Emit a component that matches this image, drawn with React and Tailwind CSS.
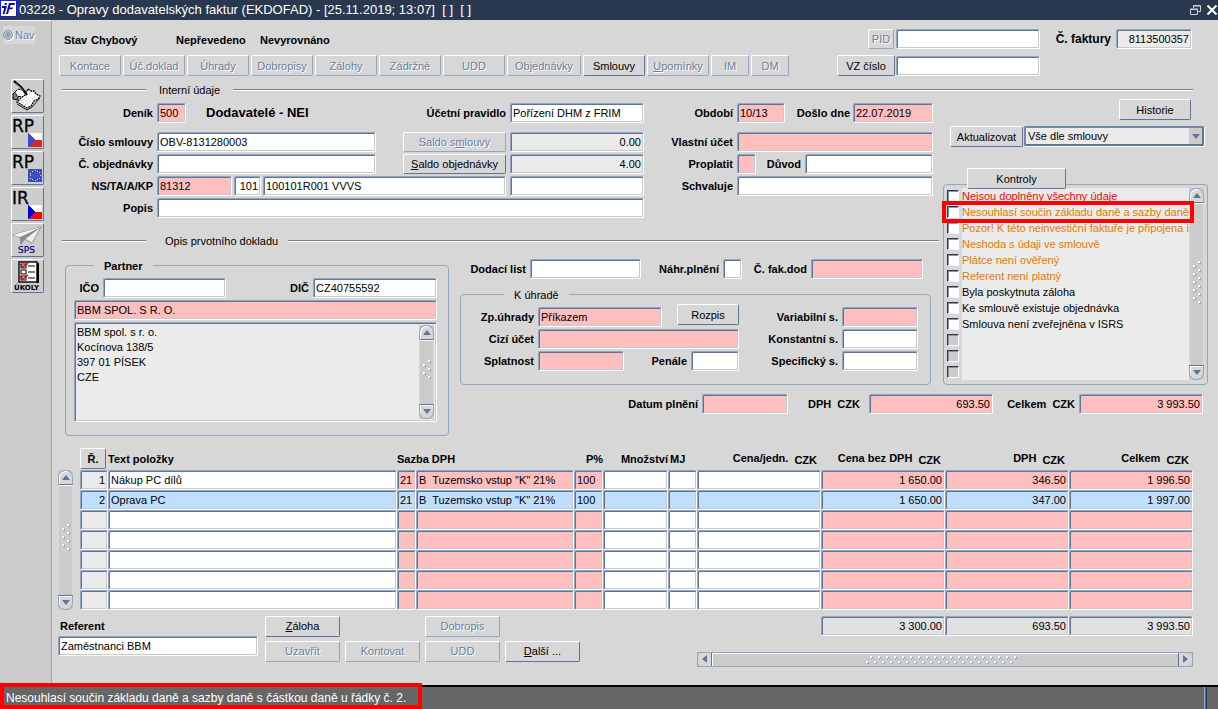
import React from "react";

const TONES = {
  white: "bg-white",
  pink: "bg-[#ffbfbf]",
  blue: "bg-[#bfdfff]",
  gray: "bg-[#ebebeb]",
  total: "bg-[#e1e1e1]",
};

const BEVEL =
  "rounded-[2px] border border-t-[#93a5bf] border-l-[#93a5bf] border-b-white border-r-white shadow-[inset_1px_1px_0_#5f7497,inset_-1px_-1px_0_#cacaca]";

function Field({ tone = "white", className = "", right = false, ...rest }) {
  return (
    <input
      type="text"
      className={`block h-5 min-w-0 px-[2px] text-[11px] text-black outline-none ${BEVEL} ${TONES[tone]} ${right ? "text-right" : ""} ${className}`}
      {...rest}
    />
  );
}

function Btn({ className = "", disabled = false, low = false, children, ...rest }) {
  const look = disabled
    ? "border-b-[#93a5bf] border-r-[#93a5bf] text-[#6a7f9f] [text-shadow:1px_1px_0_#ffffff]"
    : "border-b-[#5f7497] border-r-[#5f7497] text-black";
  return (
    <button
      type="button"
      disabled={disabled}
      className={`${low ? "h-5" : "h-[21px]"} shrink-0 whitespace-nowrap rounded-[2px] border border-t-white border-l-white text-center leading-[18px] ${look} ${className}`}
      {...rest}
    >
      {children}
    </button>
  );
}

function Lbl({ className = "", children, ...rest }) {
  return (
    <label className={`whitespace-nowrap font-bold ${className}`} {...rest}>
      {children}
    </label>
  );
}

function Arrow({ dir }) {
  const d = {
    up: "M0 5 L4 0 L8 5 Z",
    down: "M0 0 L8 0 L4 5 Z",
    left: "M5 0 L5 8 L0 4 Z",
    right: "M0 0 L5 4 L0 8 Z",
  }[dir];
  const flat = dir === "up" || dir === "down";
  return (
    <svg width={flat ? 8 : 5} height={flat ? 5 : 8} aria-hidden="true">
      <path d={d} fill="#5f7497" />
    </svg>
  );
}

function Dots({ count, vertical = true }) {
  const len = count * 4 + 4;
  return (
    <svg width={vertical ? 8 : len * 2} height={vertical ? len : 8} aria-hidden="true">
      {Array.from({ length: vertical ? count : count * 2 }, (_, i) => {
        const a = i * 4 + 1;
        const b = i % 2 ? 1 : 6;
        const x = vertical ? b : a;
        const y = vertical ? a : b;
        return (
          <g key={i}>
            <rect x={x} y={y} width="2" height="2" fill="#93a5bf" />
            <rect x={x - 1} y={y - 1} width="2" height="2" fill="#ffffff" />
          </g>
        );
      })}
    </svg>
  );
}

function VScroll({ className = "", count = 7 }) {
  return (
    <div className={`flex w-[15px] shrink-0 flex-col bg-[#cbcbcb] ${className}`}>
      <button type="button" aria-label="Nahoru" className="flex h-[15px] items-center justify-center rounded-t-[7px] border border-[#93a5bf] border-b-[#5f7497] bg-[#d7d7d7] shadow-[inset_1px_1px_0_#ffffff]">
        <Arrow dir="up" />
      </button>
      <div className="flex flex-1 items-center justify-center border-x border-t border-x-[#d7d7d7] border-t-white">
        <Dots count={count} />
      </div>
      <button type="button" aria-label="Dolů" className="flex h-[15px] items-center justify-center rounded-b-[7px] border border-[#93a5bf] border-t-[#5f7497] bg-[#d7d7d7] shadow-[inset_1px_1px_0_#ffffff]">
        <Arrow dir="down" />
      </button>
    </div>
  );
}

function Rule({ children, className = "" }) {
  return (
    <div className={`flex items-center ${className}`}>
      <div className="h-[2px] w-[84px] border-b border-b-white bg-[#7f7f7f]" />
      {children}
      <div className="h-[2px] flex-1 border-b border-b-white bg-[#7f7f7f]" />
    </div>
  );
}

function ToolButton({ label, children }) {
  return (
    <button
      type="button"
      aria-label={label}
      className="block h-[34px] w-[33px] rounded-[2px] border border-t-white border-l-white border-b-[#5f7497] border-r-[#5f7497] bg-[#cdcdcd]"
    >
      <svg width="31" height="32" viewBox="0 0 31 32" className="overflow-visible" aria-hidden="true">
        {children}
      </svg>
    </button>
  );
}

function CzechFlag({ blue }) {
  return (
    <g shapeRendering="crispEdges">
      <rect x="16" y="17" width="14" height="7" fill="#ffffff" />
      <rect x="16" y="24" width="14" height="7" fill={blue === "#3c4cc8" ? "#dc2626" : "#ff0000"} />
      <path d="M16 17 L23 24 L16 31 Z" fill={blue} />
    </g>
  );
}

function BigLetters({ children }) {
  return (
    <text x="0" y="16" fontFamily="DejaVu Sans, sans-serif" fontSize="17" fill="#000000" stroke="#000000" strokeWidth="0.3">
      {children}
    </text>
  );
}

function Sidebar() {
  return (
    <aside className="flex w-[52px] shrink-0 flex-col items-start border-t border-r border-t-white border-r-[#93a5bf] bg-[#cbcbcb]">
      <label className="mt-[5px] ml-[3px] flex h-[18px] w-8 items-center gap-[2px] bg-[#d7d7d7] text-[#6a7f9f] [text-shadow:1px_1px_0_#ffffff]">
        <input
          type="radio"
          disabled
          checked
          readOnly
          className="h-[10px] w-[10px] shrink-0 appearance-none rounded-full border border-[#7e8fa8] bg-[#93a5bf] shadow-[inset_0_0_0_1px_#d7d7d7,1px_1px_0_#ffffff]"
        />
        Nav
      </label>
      <div className="mt-[35px] ml-[11px] flex flex-col gap-[2px]">
        <ToolButton label="Poznámka">
          <path d="M4 11 L1 14 L1 19 L5 20 L7 15 Z" fill="#808080" stroke="#000" strokeWidth="1" />
          <path d="M3 12 L6 9 L13 11 L16 15 L10 17 L5 16 Z" fill="#ffffff" stroke="#000" strokeWidth="1" strokeDasharray="3 1" />
          <path d="M16 9 L19 11 L22 11 L24 14 L28 16 L26 19 L22 21 L19 26 L15 28 L5 22 L9 18 L13 15 Z" fill="#ffffff" stroke="#000" strokeWidth="1.3" strokeDasharray="2 0.700" />
          <path d="M5 24 L15 30 L20 27 L28 18" fill="none" stroke="#000" strokeWidth="0.9" />
          <path d="M9 21 l8 -5 M11 23 l9 -6 M13 25 l10 -8 M17 14 l3 -1" stroke="#999" strokeWidth="1" strokeDasharray="1 2" />
          <path d="M2 1 L9 7 L15 15" fill="none" stroke="#000" strokeWidth="2.2" />
          <path d="M4 3 L12 11" stroke="#888" strokeWidth="0.6" />
        </ToolButton>
        <ToolButton label="RP Česko">
          <BigLetters>RP</BigLetters>
          <CzechFlag blue="#3c4cc8" />
        </ToolButton>
        <ToolButton label="RP Evropa">
          <BigLetters>RP</BigLetters>
          <rect x="16" y="17" width="14" height="13" fill="#3c4cc8" />
          {Array.from({ length: 12 }, (_, i) => (
            <rect
              key={i}
              x={Math.round(22.5 + 5 * Math.cos((i * Math.PI) / 6))}
              y={Math.round(23 + 5 * Math.sin((i * Math.PI) / 6))}
              width="1"
              height="1"
              fill="#ffee33"
            />
          ))}
        </ToolButton>
        <ToolButton label="IR Česko">
          <BigLetters>IR</BigLetters>
          <CzechFlag blue="#0000e0" />
        </ToolButton>
        <ToolButton label="SPS">
          <path d="M1 11 L29 3 L20 19 L13 15 L9 20 L8 13 Z" fill="#d4d4d4" stroke="#777" strokeWidth="0.8" />
          <path d="M29 3 L8 13 L9 20 L13 15 Z" fill="#8c8c8c" />
          <path d="M29 3 L13 15 L20 19 Z" fill="#eeeeee" stroke="#888" strokeWidth="0.6" />
          <path d="M1 11 L29 3 L8 13 Z" fill="#f6f6f6" />
          <text x="6" y="29" fontFamily="DejaVu Sans, sans-serif" fontSize="9" fill="#00008b" stroke="#00008b" strokeWidth="0.2">
            SPS
          </text>
        </ToolButton>
        <ToolButton label="Úkoly">
          <rect x="7" y="2" width="18" height="20" fill="#ffffff" stroke="#000" strokeWidth="1.4" />
          <path d="M26 3 V23" stroke="#000" strokeWidth="2" />
          {[4, 10, 16].map((y) => (
            <g key={y}>
              <rect x="9" y={y} width="5" height="4" fill="#ffffff" stroke="#000" strokeWidth="1" />
              <path d={`M16 ${y + 2} h7`} stroke="#000" strokeWidth="1" />
              {y !== 10 && <path d={`M8 ${y} l3 3 l5 -4`} fill="none" stroke="#e00000" strokeWidth="1.6" />}
            </g>
          ))}
          <text x="2" y="30" fontFamily="DejaVu Sans, sans-serif" fontWeight="bold" fontSize="7" fill="#000000">
            ÚKOLY
          </text>
        </ToolButton>
      </div>
    </aside>
  );
}

const TABS = [
  { key: "kontace", text: "Kontace", w: "w-[62px]" },
  { key: "doklad", text: "Úč.doklad", w: "w-[62px]" },
  { key: "uhrady", text: "Úhrady", w: "w-[62px]" },
  { key: "dobropisy", text: "Dobropisy", w: "w-[62px]" },
  { key: "zalohy", text: "Zálohy", w: "w-[62px]" },
  { key: "zadrzne", text: "Zádržné", w: "w-[62px]" },
  { key: "udd", text: "UDD", w: "w-[62px]" },
  { key: "objednavky", text: "Objednávky", w: "w-[74px]" },
  { key: "smlouvy", text: "Smlouvy", w: "w-[62px]", on: true },
  { key: "upominky", text: <><u>U</u>pomínky</>, w: "w-[62px]" },
  { key: "im", text: "IM", w: "w-[38px]" },
  { key: "dm", text: "DM", w: "w-[38px]" },
];

function Header() {
  return (
    <div className="flex h-[56px] justify-between pt-[9px] pr-[26px] pl-[7px]">
      <div className="flex flex-col gap-[5px]">
        <div className="flex h-[21px] items-center pl-[5px] font-bold">
          <span className="w-[27px]">Stav</span>
          <span className="w-[85px]">Chybový</span>
          <span className="w-[84px]">Nepřevedeno</span>
          <span>Nevyrovnáno</span>
        </div>
        <div className="flex gap-[2px]">
          {TABS.map((t) => (
            <Btn key={t.key} disabled={!t.on} className={t.w}>
              {t.text}
            </Btn>
          ))}
        </div>
      </div>
      <div className="flex flex-col gap-[6px]">
        <div className="flex items-center justify-end">
          <Btn disabled low className="mr-[2px] w-[26px]">PID</Btn>
          <Field aria-label="PID" className="w-[144px]" />
          <Lbl htmlFor="faktura" className="w-[76px] pr-[5px] text-right text-xs">Č. faktury</Lbl>
          <Field id="faktura" tone="gray" right defaultValue="8113500357" className="w-[76px]" />
        </div>
        <div className="flex items-center">
          <Btn className="mr-px w-[58px]">VZ číslo</Btn>
          <Field aria-label="VZ číslo" className="mr-[152px] w-[144px]" />
        </div>
      </div>
    </div>
  );
}

function InternalForm() {
  return (
    <div className="col-span-2 grid grid-cols-[101px_1fr_134px_85px_196px] items-center gap-x-1 gap-y-[2px] pt-[6px] pr-[6px]">
      <Lbl htmlFor="denik" className="mb-[7px] text-right">Deník</Lbl>
      <div className="mb-[7px] flex items-center">
        <Field id="denik" tone="pink" defaultValue="500" className="w-[29px]" />
        <span className="ml-5 text-[13px] leading-5 font-bold whitespace-nowrap">Dodavatelé - NEI</span>
        <Lbl htmlFor="pravidlo" className="ml-auto">Účetní pravidlo</Lbl>
      </div>
      <Field id="pravidlo" defaultValue="Pořízení DHM z FRIM" className="mb-[7px] w-full" />
      <Lbl htmlFor="obdobi" className="mb-[7px] text-right">Období</Lbl>
      <div className="mb-[7px] flex items-center">
        <Field id="obdobi" tone="pink" defaultValue="10/13" className="w-[48px]" />
        <Lbl htmlFor="doslo" className="flex-1 pr-[3px] text-right">Došlo dne</Lbl>
        <Field id="doslo" tone="pink" defaultValue="22.07.2019" className="w-[80px]" />
      </div>

      <Lbl htmlFor="csmlouvy" className="text-right">Číslo smlouvy</Lbl>
      <div className="flex items-center gap-[27px]">
        <Field id="csmlouvy" defaultValue="OBV-8131280003" className="flex-1" />
        <Btn disabled low className="w-[103px]">Saldo s<u>m</u>louvy</Btn>
      </div>
      <Field aria-label="Saldo smlouvy" tone="gray" right defaultValue="0.00" className="w-full" />
      <Lbl htmlFor="ucet" className="text-right">Vlastní účet</Lbl>
      <Field id="ucet" tone="pink" className="w-full" />

      <Lbl htmlFor="cobj" className="text-right">Č. objednávky</Lbl>
      <div className="flex items-center gap-[27px]">
        <Field id="cobj" className="flex-1" />
        <Btn low className="w-[103px]"><u>S</u>aldo objednávky</Btn>
      </div>
      <Field aria-label="Saldo objednávky" tone="gray" right defaultValue="4.00" className="w-full" />
      <Lbl htmlFor="proplatit" className="text-right">Proplatit</Lbl>
      <div className="flex items-center">
        <Field id="proplatit" tone="pink" className="w-[19px]" />
        <Lbl htmlFor="duvod" className="w-[49px] pr-1 text-right">Důvod</Lbl>
        <Field id="duvod" className="flex-1" />
      </div>

      <Lbl htmlFor="ns" className="text-right">NS/TA/A/KP</Lbl>
      <div className="flex gap-[2px]">
        <Field id="ns" tone="pink" defaultValue="81312" className="w-[75px]" />
        <Field aria-label="TA" right defaultValue="101" className="w-[27px]" />
        <Field aria-label="A" defaultValue="100101R001 VVVS" className="flex-1" />
      </div>
      <Field aria-label="KP" className="w-full" />
      <Lbl htmlFor="schvaluje" className="text-right">Schvaluje</Lbl>
      <Field id="schvaluje" className="w-full" />

      <Lbl htmlFor="popis" className="text-right">Popis</Lbl>
      <Field id="popis" className="col-span-2 w-full" />
    </div>
  );
}

const CHECKS = [
  { text: "Nejsou doplněny všechny údaje", tone: "text-[#ff0000]" },
  { text: "Nesouhlasí součin základu daně a sazby daně", tone: "text-[#e07b00]", active: true },
  { text: "Pozor! K této neinvestiční faktuře je připojena in", tone: "text-[#e07b00]" },
  { text: "Neshoda s údaji ve smlouvě", tone: "text-[#e07b00]" },
  { text: "Plátce není ověřený", tone: "text-[#e07b00]" },
  { text: "Referent není platný", tone: "text-[#e07b00]" },
  { text: "Byla poskytnuta záloha", tone: "text-black" },
  { text: "Ke smlouvě existuje objednávka", tone: "text-black" },
  { text: "Smlouva není zveřejněna v ISRS", tone: "text-black" },
  { text: "" },
  { text: "" },
  { text: "" },
];

function Checks() {
  return (
    <div className="row-span-3 flex flex-col pt-[2px] pr-[10px] pl-1">
      <Btn className="mr-[17px] w-[72px] self-end">Historie</Btn>
      <div className="mt-[6px] mr-1 ml-[7px] flex gap-px">
        <Btn className="w-[73px]">Aktualizovat</Btn>
        <div className="relative min-w-0 flex-1">
          <select
            aria-label="Rozsah aktualizace"
            className="block h-5 w-full appearance-none rounded-[2px] border-2 border-[#5f7497] border-t-[#7489a8] border-l-[#7489a8] bg-[#ebebeb] pl-[2px] text-[11px] text-black shadow-[1px_1px_0_#ffffff] outline-none"
          >
            <option>Vše dle smlouvy</option>
          </select>
          <span className="pointer-events-none absolute top-[2px] right-[2px] flex h-4 w-[13px] items-center justify-center bg-[#cbcbcb]">
            <Arrow dir="down" />
          </span>
        </div>
      </div>
      <Btn className="z-10 mt-[21px] -mb-[5px] ml-6 w-[99px] self-start bg-[#d7d7d7]">Kontroly</Btn>
      <div className="relative flex rounded-[4px] border border-[#93a5bf] pt-[3px] pr-[3px] pb-1 pl-[3px]">
        <ul className="min-w-0 flex-1">
          {CHECKS.map((c, i) => (
            <li key={i} className={`flex h-4 items-center ${c.active ? "bg-[#bfdfff]" : ""}`}>
              <input
                type="checkbox"
                id={`kontrola-${i}`}
                aria-label={c.text || "Volná kontrola"}
                disabled={!c.text}
                className="mr-[3px] h-3 w-3 shrink-0 appearance-none border border-t-[#29384e] border-l-[#29384e] border-b-white border-r-white bg-white shadow-[inset_1px_1px_0_#8794a8] disabled:bg-[#cbcbcb]"
              />
              <label
                htmlFor={`kontrola-${i}`}
                className={`block h-4 min-w-0 flex-1 overflow-hidden bg-[#ebebeb] leading-4 whitespace-nowrap ${c.tone || ""}`}
              >
                {c.text}
              </label>
            </li>
          ))}
        </ul>
        <VScroll count={11} />
        <div className="pointer-events-none absolute top-4 -left-[2px] h-[22px] w-[252px] border-4 border-[#ff0000]" />
      </div>
    </div>
  );
}

function Partner() {
  return (
    <fieldset className="row-span-2 mr-[3px] ml-[13px] min-w-0 self-start rounded-[4px] border border-[#93a5bf] pr-[11px] pb-[13px] pl-2">
      <legend className="ml-5 px-[10px] leading-[14px] font-bold">Partner</legend>
      <div className="mt-[5px] flex items-center">
        <Lbl htmlFor="ico" className="w-[29px] pr-1 text-right">IČO</Lbl>
        <Field id="ico" className="w-[123px]" />
        <Lbl htmlFor="dic" className="flex-1 pr-1 text-right">DIČ</Lbl>
        <Field id="dic" defaultValue="CZ40755592" className="w-[124px]" />
      </div>
      <Field aria-label="Název partnera" tone="pink" defaultValue="BBM SPOL. S R. O." className="mt-[2px] w-full" />
      <div className={`mt-[2px] flex h-[100px] p-[2px] ${BEVEL} ${TONES.gray}`}>
        <textarea
          aria-label="Adresa partnera"
          className="min-w-0 flex-1 resize-none overflow-hidden bg-transparent text-[11px] leading-[15px] outline-none"
          defaultValue={"BBM spol. s r. o.\nKocínova 138/5\n397 01 PÍSEK\nCZE"}
        />
        <VScroll count={5} />
      </div>
    </fieldset>
  );
}

function Payment() {
  return (
    <div className="min-w-0 pr-2">
      <div className="flex items-center">
        <Lbl htmlFor="dodaci" className="w-[78px] pr-1 text-right">Dodací list</Lbl>
        <Field id="dodaci" className="flex-1" />
        <Lbl htmlFor="nahr" className="w-[82px] pr-1 text-right">Náhr.plnění</Lbl>
        <Field id="nahr" className="w-[19px]" />
        <Lbl htmlFor="fakdod" className="w-[69px] pr-1 text-right">Č. fak.dod</Lbl>
        <Field id="fakdod" tone="pink" className="mr-2 w-[112px]" />
      </div>
      <fieldset className="mt-[9px] ml-2 min-w-0 rounded-[4px] border border-[#93a5bf] pr-3 pb-[13px]">
        <legend className="ml-[43px] px-[10px] leading-[14px]">K úhradě</legend>
        <div className="mt-[5px] grid grid-cols-[73px_1fr_95px_76px] items-center gap-x-1 gap-y-[2px]">
          <Lbl htmlFor="zp" className="text-right">Zp.úhrady</Lbl>
          <div className="flex h-5 items-center justify-between">
            <Field id="zp" tone="pink" defaultValue="Příkazem" className="w-[124px]" />
            <Btn className="mb-1 w-[62px]">Rozpis</Btn>
          </div>
          <Lbl htmlFor="vs" className="text-right">Variabilní s.</Lbl>
          <Field id="vs" tone="pink" className="w-full" />
          <Lbl htmlFor="cizi" className="text-right">Cizí účet</Lbl>
          <Field id="cizi" tone="pink" className="w-full" />
          <Lbl htmlFor="ks" className="text-right">Konstantní s.</Lbl>
          <Field id="ks" className="w-full" />
          <Lbl htmlFor="splatnost" className="text-right">Splatnost</Lbl>
          <div className="flex items-center">
            <Field id="splatnost" tone="pink" className="w-[86px]" />
            <Lbl htmlFor="penale" className="flex-1 pr-1 text-right">Penále</Lbl>
            <Field id="penale" className="w-[48px]" />
          </div>
          <Lbl htmlFor="ss" className="text-right">Specifický s.</Lbl>
          <Field id="ss" className="w-full" />
        </div>
      </fieldset>
    </div>
  );
}

function Sums() {
  return (
    <div className="col-span-2 flex items-start justify-end pt-[9px] pr-[15px]">
      <div className="flex items-center">
        <Lbl htmlFor="datum" className="pr-1">Datum plnění</Lbl>
        <Field id="datum" tone="pink" className="w-[86px]" />
        <Lbl htmlFor="dph" className="ml-5 w-[61px]">DPH&nbsp; CZK</Lbl>
        <Field id="dph" tone="pink" right defaultValue="693.50" className="w-[124px]" />
        <Lbl htmlFor="celkem" className="w-[86px] pr-1 text-right">Celkem&nbsp; CZK</Lbl>
        <Field id="celkem" tone="pink" right defaultValue="3 993.50" className="w-[124px]" />
      </div>
    </div>
  );
}

const COLS = [
  { name: "Řádek", tone: "gray", right: true, w: "w-[28px]" },
  { name: "Text položky", tone: "white", w: "" },
  { name: "Sazba", tone: "pink", w: "w-[19px]" },
  { name: "Druh DPH", tone: "pink", w: "w-[158px]" },
  { name: "P%", tone: "pink", w: "w-[29px]" },
  { name: "Množství", tone: "white", right: true, w: "w-[65px]" },
  { name: "MJ", tone: "white", w: "w-[29px]" },
  { name: "Cena/jedn.", tone: "white", right: true, w: "w-[124px]" },
  { name: "Cena bez DPH", tone: "pink", right: true, w: "w-[124px]" },
  { name: "DPH", tone: "pink", right: true, w: "w-[124px]" },
  { name: "Celkem", tone: "pink", right: true, w: "w-[124px]" },
];

const ROWS = [
  ["1", "Nákup PC dílů", "21", 'B  Tuzemsko vstup "K" 21%', "100", "", "", "", "1 650.00", "346.50", "1 996.50"],
  ["2", "Oprava PC", "21", 'B  Tuzemsko vstup "K" 21%', "100", "", "", "", "1 650.00", "347.00", "1 997.00"],
  [],
  [],
  [],
  [],
  [],
];

function MoneyHead({ children }) {
  return (
    <th className="pr-1 whitespace-nowrap">
      <div className="flex justify-end gap-[6px]">
        <span>{children}</span>
        <span className="pt-[2px]">CZK</span>
      </div>
    </th>
  );
}

function Items() {
  return (
    <div className="flex pr-[25px] pl-[6px]">
      <VScroll className="mt-[22px] mr-[7px]" count={7} />
      <table className="min-w-0 flex-1 table-fixed border-collapse">
        <colgroup>
          {COLS.map((c) => (
            <col key={c.name} className={c.w} />
          ))}
        </colgroup>
        <thead>
          <tr className="h-[22px] text-left align-middle font-bold">
            <th>
              <Btn className="block w-[26px] font-bold">Ř.</Btn>
            </th>
            <th>Text položky</th>
            <th colSpan={2}>Sazba DPH</th>
            <th className="text-right">P%</th>
            <th className="text-right">Množství</th>
            <th className="pl-[2px]">MJ</th>
            <MoneyHead>Cena/jedn.</MoneyHead>
            <MoneyHead>Cena bez DPH</MoneyHead>
            <MoneyHead>DPH</MoneyHead>
            <MoneyHead>Celkem</MoneyHead>
          </tr>
        </thead>
        <tbody>
          {ROWS.map((row, r) => (
            <tr key={r}>
              {COLS.map((c, i) => (
                <td key={c.name} className="p-0">
                  <Field
                    aria-label={`${c.name} ${r + 1}`}
                    tone={r === 1 ? "blue" : c.tone}
                    right={c.right}
                    defaultValue={row[i] || ""}
                    className="w-full"
                  />
                </td>
              ))}
            </tr>
          ))}
        </tbody>
      </table>
    </div>
  );
}

function BottomBar() {
  return (
    <div className="mt-[6px] flex pr-[25px] pl-[6px]">
      <div className="flex w-[200px] flex-col">
        <Lbl htmlFor="referent" className="pl-[2px] leading-5">Referent</Lbl>
        <Field id="referent" defaultValue="Zaměstnanci BBM" className="w-full" />
      </div>
      <div className="ml-[7px] grid grid-cols-4 content-start gap-x-[5px] gap-y-[4px]">
        <Btn className="w-[75px]"><u>Z</u>áloha</Btn>
        <span />
        <Btn disabled className="w-[75px]">Dobropis</Btn>
        <span />
        <Btn disabled className="w-[75px]">Uzavřít</Btn>
        <Btn disabled className="w-[75px]">Kontovat</Btn>
        <Btn disabled className="w-[75px]">UDD</Btn>
        <Btn className="w-[75px]"><u>D</u>alší ...</Btn>
      </div>
      <div className="ml-auto flex w-[496px] flex-col items-end">
        <div className="flex">
          <Field aria-label="Součet bez DPH" tone="total" right defaultValue="3 300.00" className="w-[124px]" />
          <Field aria-label="Součet DPH" tone="total" right defaultValue="693.50" className="w-[124px]" />
          <Field aria-label="Součet celkem" tone="total" right defaultValue="3 993.50" className="w-[124px]" />
        </div>
        <div className="mt-4 flex h-[15px] w-full border border-[#93a5bf] bg-[#cbcbcb]">
          <button type="button" aria-label="Vlevo" className="flex w-[14px] items-center justify-center rounded-l-[6px] border-r border-r-[#5f7497] bg-[#d7d7d7]">
            <Arrow dir="left" />
          </button>
          <div className="flex flex-1 items-center justify-center border-t border-l border-white">
            <Dots vertical={false} count={19} />
          </div>
          <button type="button" aria-label="Vpravo" className="flex w-[14px] items-center justify-center rounded-r-[6px] border-l border-l-[#5f7497] bg-[#d7d7d7]">
            <Arrow dir="right" />
          </button>
        </div>
      </div>
    </div>
  );
}

function TitleBar() {
  return (
    <header className="flex h-5 items-center bg-[#29384e] text-[13px] text-white">
      <svg width="17" height="17" viewBox="0 0 17 17" className="mb-[3px] shrink-0" aria-hidden="true">
        <rect width="17" height="17" fill="#1818e8" />
        <rect x="1" y="1" width="15" height="15" fill="#ffffff" />
        <path d="M5 3 H7 L6.500 5 H4.500 Z M2 6 H7 L4.500 14 H2.500 L4.300 8 H2 Z" fill="#0c0c9c" />
        <path d="M9 3 H15 L14.300 5 H10.500 L9.800 7.500 H13 L12.400 9.300 H9.300 L8 14 H6 Z" fill="#0c0c9c" />
      </svg>
      <h1 className="ml-[2px] leading-5 whitespace-pre">
        03228 - Opravy dodavatelských faktur (EKDOFAD) - [25.11.2019; 13:07]  [ ]  [ ]
      </h1>
      <div className="ml-auto flex items-center gap-[6px] pr-px">
        <button type="button" aria-label="Obnovit">
          <svg width="11" height="10" viewBox="0 0 11 10" className="block" aria-hidden="true">
            <path d="M3.500 3 V0.500 H10.500 V6.500 H7.500 M3 1 H11" fill="none" stroke="#d0d0d0" />
            <path d="M0.500 4.500 H7.500 V9.500 H0.500 Z M0 4 H8" fill="none" stroke="#d0d0d0" />
          </svg>
        </button>
        <button type="button" aria-label="Zavřít">
          <svg width="10" height="10" viewBox="0 0 10 10" className="block" aria-hidden="true">
            <path d="M0.500 0.500 L9.500 9.500 M9.500 0.500 L0.500 9.500" stroke="#ffffff" strokeWidth="2" />
          </svg>
        </button>
      </div>
    </header>
  );
}

export default function App() {
  return (
    <div className="flex min-h-screen min-w-[1180px] flex-col bg-[#d7d7d7] font-['Liberation_Sans',Arial,sans-serif] text-[11px] leading-[14px] text-black">
      <TitleBar />
      <div className="flex flex-1">
        <Sidebar />
        <main className="min-w-0 flex-1">
          <Header />
          <Rule className="mt-[7px] h-[14px] pr-[25px] pl-[10px]">
            <span className="px-[13px]">Interní údaje</span>
          </Rule>
          <div className="grid grid-cols-[400px_1fr_279px] grid-rows-[auto_auto_auto_1fr]">
            <InternalForm />
            <Checks />
            <Rule className="col-span-2 mt-[16px] mb-[10px] h-[14px] pl-[10px]">
              <span className="pr-[10px] pl-[19px]">Opis prvotního dokladu</span>
            </Rule>
            <Partner />
            <Payment />
            <Sums />
          </div>
          <div className="h-3" />
          <Items />
          <BottomBar />
        </main>
      </div>
      <footer className="relative flex h-6 items-center border-t-2 border-black bg-[#666666] text-white">
        <p className="pl-[6px] text-xs whitespace-nowrap">
          Nesouhlasí součin základu daně a sazby daně s částkou daně u řádky č. 2.
        </p>
        <div className="mr-[11px] ml-auto h-full w-[3px] border-r border-l border-l-[#93a5bf] border-r-[#29384e]" />
        <div className="pointer-events-none absolute -top-1 bottom-0 left-0 w-[422px] border-4 border-[#ff0000]" />
      </footer>
    </div>
  );
}
